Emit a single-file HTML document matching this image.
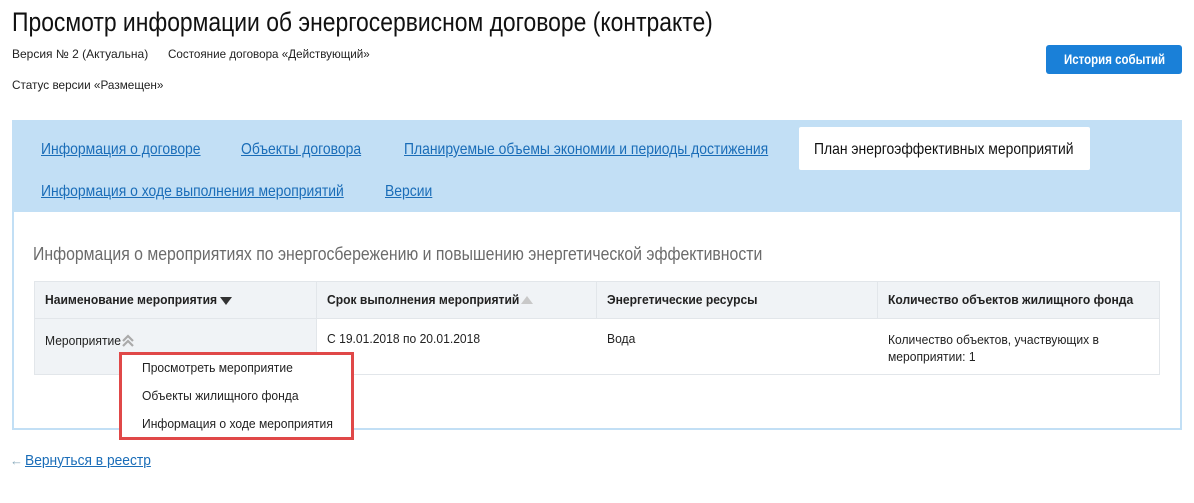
<!DOCTYPE html>
<html><head><meta charset="utf-8"><style>
*{margin:0;padding:0;box-sizing:border-box}
body{width:1194px;height:503px;background:#fff;font-family:"Liberation Sans",sans-serif;color:#222;position:relative;overflow:hidden}
.a{position:absolute;white-space:nowrap;transform-origin:left top}
.lnk{color:#1a6db8;text-decoration:underline;font-size:16px;transform:scaleX(.87)}
.th{font-weight:bold;font-size:13px;color:#222;transform:scaleX(.93)}
.td{font-size:13px;color:#222;transform:scaleX(.93)}
</style></head><body>
<div class="a" style="left:12px;top:7px;font-size:27px;color:#111;transform:scaleX(.848)">Просмотр информации об энергосервисном договоре (контракте)</div>
<div class="a" style="left:12px;top:47px;font-size:12px">Версия № 2 (Актуальна)</div>
<div class="a" style="left:168px;top:47px;font-size:12px;transform:scaleX(.97)">Состояние договора «Действующий»</div>
<div class="a" style="left:12px;top:78px;font-size:12px;transform:scaleX(.98)">Статус версии «Размещен»</div>
<div class="a" style="left:1046px;top:45px;width:136px;height:29px;background:#1a80d8;border-radius:3px"></div>
<div class="a" style="left:1064px;top:51px;color:#fff;font-weight:bold;font-size:14px;transform:scaleX(.82)">История событий</div>

<div class="a" style="left:12px;top:120px;width:1170px;height:310px;border:2px solid #c2dff5;border-top:none;background:#fff"></div>
<div class="a" style="left:12px;top:120px;width:1170px;height:92px;background:#c2dff5"></div>
<div class="a" style="left:799px;top:127px;width:291px;height:43px;background:#fff;border-radius:2px"></div>
<div class="a lnk" style="left:41px;top:141px">Информация о договоре</div>
<div class="a lnk" style="left:241px;top:141px">Объекты договора</div>
<div class="a lnk" style="left:404px;top:141px">Планируемые объемы экономии и периоды достижения</div>
<div class="a" style="left:814px;top:141px;font-size:16px;color:#111;transform:scaleX(.87)">План энергоэффективных мероприятий</div>
<div class="a lnk" style="left:41px;top:183px">Информация о ходе выполнения мероприятий</div>
<div class="a lnk" style="left:385px;top:183px">Версии</div>

<div class="a" style="left:33px;top:244px;font-size:18px;color:#6b6b6b;transform:scaleX(.878)">Информация о мероприятиях по энергосбережению и повышению энергетической эффективности</div>

<div class="a" style="left:34px;top:281px;width:1126px;height:94px;border:1px solid #e2e6ea"></div>
<div class="a" style="left:35px;top:282px;width:1124px;height:37px;background:#f0f3f6;border-bottom:1px solid #e2e6ea"></div>
<div class="a" style="left:35px;top:319px;width:281px;height:55px;background:#f0f3f6"></div>
<div class="a" style="left:316px;top:282px;width:1px;height:92px;background:#e2e6ea"></div>
<div class="a" style="left:596px;top:282px;width:1px;height:37px;background:#e2e6ea"></div>
<div class="a" style="left:877px;top:282px;width:1px;height:37px;background:#e2e6ea"></div>
<div class="a th" style="left:45px;top:292px">Наименование мероприятия</div>
<div class="a" style="left:220px;top:297px;width:0;height:0;border-left:6px solid transparent;border-right:6px solid transparent;border-top:8px solid #333"></div>
<div class="a th" style="left:327px;top:292px">Срок выполнения мероприятий</div>
<div class="a" style="left:521px;top:296px;width:0;height:0;border-left:6px solid transparent;border-right:6px solid transparent;border-bottom:8px solid #c8c8c8"></div>
<div class="a th" style="left:607px;top:292px">Энергетические ресурсы</div>
<div class="a th" style="left:888px;top:292px">Количество объектов жилищного фонда</div>
<div class="a td" style="left:45px;top:333px">Мероприятие</div>
<svg class="a" style="left:121px;top:333px" width="14" height="14" viewBox="0 0 14 14"><path d="M2 8 L7 3 L12 8 M2 13 L7 8 L12 13" fill="none" stroke="#aaa" stroke-width="2.2"/></svg>
<div class="a td" style="left:327px;top:331px">С 19.01.2018 по 20.01.2018</div>
<div class="a td" style="left:607px;top:331px">Вода</div>
<div class="a td" style="left:888px;top:331px;line-height:17px">Количество объектов, участвующих в<br>мероприятии: 1</div>

<div class="a" style="left:119px;top:352px;width:235px;height:88px;background:#fff;border:3px solid #e04848"></div>
<div class="a td" style="left:142px;top:360px">Просмотреть мероприятие</div>
<div class="a td" style="left:142px;top:388px">Объекты жилищного фонда</div>
<div class="a td" style="left:142px;top:416px">Информация о ходе мероприятия</div>

<div class="a" style="left:10px;top:453px;font-size:13px;color:#8ab">←</div>
<div class="a" style="left:25px;top:452px;font-size:15px;color:#1a6db8;text-decoration:underline;transform:scaleX(.92)">Вернуться в реестр</div>
</body></html>
